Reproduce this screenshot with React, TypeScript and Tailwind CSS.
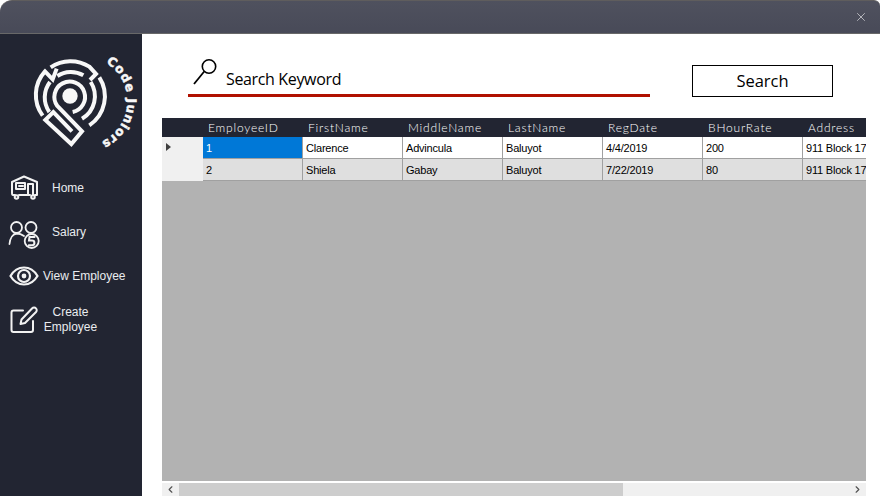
import React from "react";
import { ChevronLeft, ChevronRight, X } from "lucide-react";

const cols = ["EmployeeID", "FirstName", "MiddleName", "LastName", "RegDate", "BHourRate", "Address"];
const rows = [
  ["1", "Clarence", "Advincula", "Baluyot", "4/4/2019", "200", "911 Block 17"],
  ["2", "Shiela", "Gabay", "Baluyot", "7/22/2019", "80", "911 Block 17"],
];

function Logo() {
  return (
    <svg width="110" height="110" viewBox="60 150 330 330" className="block overflow-visible">
      <defs>
        <path id="logoArc" d="M318 188 A 135 135 0 0 1 248 438" />
      </defs>
      <g fill="none" stroke="#f8f8f8" strokeWidth="12" strokeLinejoin="miter">
        <path d="M128 347 A 105 105 0 0 1 135 214 L 158 238 L 170 206" />
        <path d="M152 202 A 105 105 0 0 1 268 200 L 288 222 L 270 240" />
        <path d="M172 228 A 74 74 0 0 1 250 226" />
        <path d="M298 232 A 105 105 0 0 1 268 376" />
        <path d="M272 246 A 78 78 0 0 1 246 356" />
        <path d="M150 246 A 76 76 0 0 0 148 336" />
        <path d="M218 336 A 46 46 0 1 0 172 318 L 246 394 L 214 432 L 136 360 L 160 336 L 216 394" />
      </g>
      <circle cx="210" cy="288" r="23" fill="#f8f8f8" />
      <text fontFamily="'DejaVu Sans', sans-serif" fontWeight="700" fontSize="37" fill="#f8f8f8" stroke="#f8f8f8" strokeWidth="1.5">
        <textPath href="#logoArc" textLength="290" lengthAdjust="spacing">Code Juniors</textPath>
      </text>
    </svg>
  );
}

function CamperIcon() {
  return (
    <svg width="30" height="28" viewBox="0 0 30 28" fill="none" stroke="#f2f2f2" strokeWidth="2" strokeLinecap="round" strokeLinejoin="round">
      <path d="M5 21 H3 C2 21 2 20 2 19 V8 L14 2.5 L27 8 V19 C27 20.5 27 21 27 21 H25" />
      <path d="M9 21 H20" />
      <rect x="6" y="9" width="9" height="6" />
      <path d="M9 12 H13" />
      <path d="M18 21 V10 H23 V21" />
      <circle cx="6.5" cy="23" r="1.8" />
      <circle cx="23" cy="23" r="1.8" />
    </svg>
  );
}

function SalaryIcon() {
  return (
    <svg width="34" height="30" viewBox="0 0 34 30" className="overflow-visible" fill="none" stroke="#f2f2f2" strokeWidth="1.8" strokeLinecap="round">
      <circle cx="8.5" cy="10.5" r="5.5" />
      <circle cx="23" cy="10.5" r="5.5" />
      <path d="M1.5 27 C2 21 5 17 8.5 16.5 C11 16.5 14 17.5 16 19" />
      <circle cx="23.7" cy="24" r="7" />
      <path d="M26.5 20 H21.5 L21 23.6 H24 C27.2 23.6 27.2 28.2 24 28.2 H20.8" strokeWidth="2" />
    </svg>
  );
}

function EyeIcon() {
  return (
    <svg width="30" height="20" viewBox="0 0 30 20" fill="none" stroke="#f2f2f2" strokeWidth="2.2">
      <path d="M1.5 10 C5 4 10 1.5 15 1.5 C20 1.5 25 4 28.5 10 C25 16 20 18.5 15 18.5 C10 18.5 5 16 1.5 10 Z" />
      <circle cx="15" cy="10" r="6" />
      <circle cx="15" cy="10" r="2.4" fill="#f2f2f2" stroke="none" />
    </svg>
  );
}

function EditIcon() {
  return (
    <svg width="28" height="28" viewBox="0 0 28 28" fill="none" stroke="#f2f2f2" strokeWidth="2" strokeLinecap="round" strokeLinejoin="round">
      <path d="M13 4.5 H3.5 C2.2 4.5 1.5 5.2 1.5 6.5 V24 C1.5 25.3 2.2 26 3.5 26 H21 C22.3 26 23 25.3 23 24 V15" />
      <path d="M10.5 18 L11.5 13.5 L22 2.5 C23.2 1.3 25 1.3 26 2.4 C27 3.4 27 5 25.8 6.2 L15 17 Z" />
    </svg>
  );
}

function SearchGlyph() {
  return (
    <svg width="28" height="28" viewBox="0 0 28 28" fill="none" stroke="#000" strokeWidth="1.6">
      <circle cx="18" cy="9.5" r="6.7" />
      <path d="M13.2 14.5 L3 27" strokeWidth="1.8" />
    </svg>
  );
}

export default function App() {
  return (
    <div className="w-[880px] h-[496px] flex flex-col bg-white overflow-hidden font-['Liberation_Sans',sans-serif]">
      <div className="h-[34px] shrink-0 flex items-center justify-end pr-[12px] bg-gradient-to-b from-[#4f515e] to-[#484a58] border-t border-t-[#5f5d5d] border-b border-b-[#686868] rounded-tl-[12px] rounded-tr-[6px]">
        <X size={14} strokeWidth={1} color="#ffffff" />
      </div>

      <div className="flex-1 flex min-h-0">
        <aside className="w-[142px] shrink-0 bg-[#222532] flex flex-col text-[#e9ecef] text-[12px]">
          <div className="h-[132px] pt-[16px] pl-[20px]">
            <Logo />
          </div>
          <div className="h-[44px] flex items-center pl-[10px]">
            <span className="w-[42px] shrink-0"><CamperIcon /></span>
            <span>Home</span>
          </div>
          <div className="h-[44px] flex items-center pl-[8px]">
            <span className="w-[44px] shrink-0"><SalaryIcon /></span>
            <span>Salary</span>
          </div>
          <div className="h-[44px] flex items-center pl-[9px]">
            <span className="w-[34px] shrink-0"><EyeIcon /></span>
            <span>View Employee</span>
          </div>
          <div className="h-[44px] flex items-center pl-[10px]">
            <span className="w-[33px] shrink-0"><EditIcon /></span>
            <span className="w-[55px] text-center leading-[15px]">Create Employee</span>
          </div>
        </aside>

        <main className="flex-1 min-w-0 flex flex-col pl-[20px] pr-[14px]">
          <div className="h-[84px] shrink-0 flex pl-[26px] pt-[30px]">
            <div className="w-[462px] h-[33px] border-b-[3px] border-b-[#b01000] relative flex items-end pb-[5px] pl-[38px]">
              <span className="absolute left-[3px] top-[-7px]"><SearchGlyph /></span>
              <span className="text-[16px] leading-[20px] text-black font-['Open_Sans',sans-serif] tracking-[-0.35px]">Search Keyword</span>
            </div>
            <div className="ml-[42px] mt-[1px] pt-[1px] w-[141px] h-[32px] border border-black flex items-center justify-center text-[16.5px] text-black font-['Open_Sans',sans-serif]">
              Search
            </div>
          </div>

          <div className="flex-1 min-h-0 flex flex-col bg-[#b2b2b2]">
            <div className="h-[19px] shrink-0 flex bg-[#222532] text-white text-[12px] font-light font-['Lato',sans-serif] tracking-[0.8px]">
              <div className="w-[41px] shrink-0" />
              {cols.map((c) => (
                <div key={c} className="w-[100px] shrink-0 pl-[5px] flex items-center whitespace-nowrap">{c}</div>
              ))}
            </div>
            {rows.map((r, i) => (
              <div key={i} className="h-[22px] shrink-0 flex text-[11px] text-black overflow-hidden tracking-[-0.2px]">
                <div className="w-[41px] shrink-0 bg-[#f0f0f0] pl-[4px] pt-[6px]">
                  {i === 0 && <div className="w-0 h-0 border-y-[4px] border-y-transparent border-l-[5px] border-l-[#404040]" />}
                </div>
                {r.map((v, j) => (
                  <div
                    key={j}
                    className={`w-[100px] shrink-0 pl-[3px] pt-[2px] flex items-center whitespace-nowrap overflow-hidden border-r border-b border-[#a0a0a0] ${
                      i === 0 ? (j === 0 ? "bg-[#0078d7] text-white" : "bg-white") : "bg-[#dfdfdf]"
                    }`}
                  >
                    {v}
                  </div>
                ))}
              </div>
            ))}
            <div className="flex-1" />
            <div className="h-[15px] shrink-0 border-t-[2px] border-t-white bg-[#f0f0f0] flex items-center">
              <span className="w-[17px] flex justify-center"><ChevronLeft size={11} strokeWidth={2.5} color="#505050" /></span>
              <div className="w-[444px] h-full bg-[#cdcdcd]" />
              <div className="flex-1" />
              <span className="w-[17px] flex justify-center"><ChevronRight size={11} strokeWidth={2.5} color="#505050" /></span>
            </div>
          </div>
        </main>
      </div>
    </div>
  );
}
